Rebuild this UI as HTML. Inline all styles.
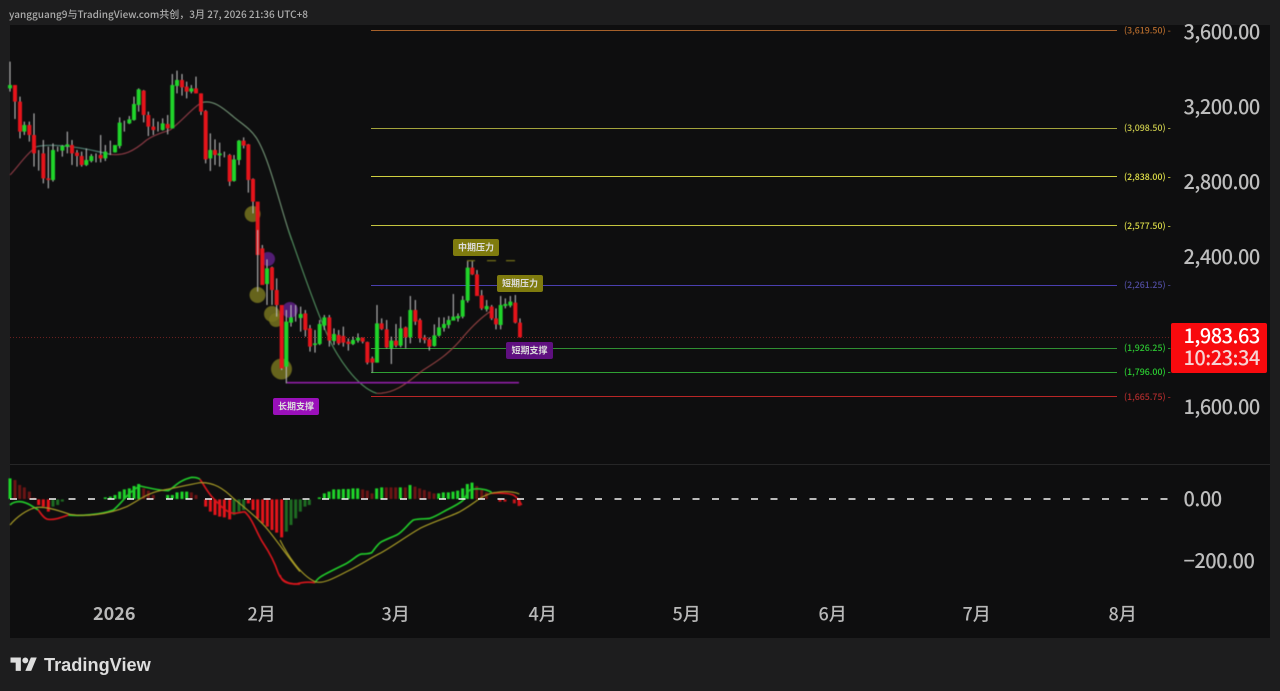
<!DOCTYPE html>
<html><head><meta charset="utf-8"><style>
html,body{margin:0;padding:0;width:1280px;height:691px;overflow:hidden;background:#1d1d1e}
svg{position:absolute;left:0;top:0;display:block}
text{font-family:"Noto Sans CJK SC","Liberation Sans",sans-serif}
.ax{font-size:20px;fill:#bdbdbd;font-weight:500;letter-spacing:-.5px}
.tm{font-size:18px;fill:#b8b8b8;font-weight:500}
.fb{font-size:8.800px;font-weight:500}
.tg{font-size:9px;fill:#dcdcdc;text-anchor:middle;font-weight:700}
</style></head><body>
<svg width="1280" height="691" viewBox="0 0 1280 691" xmlns="http://www.w3.org/2000/svg">
<rect x="10" y="25" width="1260" height="613" fill="#0e0e0f"/>
<rect x="10" y="464" width="1260" height="1" fill="#262627"/>
<text x="9" y="18" font-size="10" fill="#acacac" font-weight="500">yangguang9与TradingView.com共创，3月 27, 2026 21:36 UTC+8</text>

<!-- fib lines -->
<g fill="none" stroke-width="1">
<path d="M371 30.500H1117" stroke="#a5602a"/>
<path d="M371 128.500H1117" stroke="#a3a33c"/>
<path d="M371 176.500H1117" stroke="#cfcf40"/>
<path d="M371 225.500H1117" stroke="#c4c43e"/>
<path d="M371 285.500H1117" stroke="#4a3fb0"/>
<path d="M371 348.500H1117" stroke="#2f8f33"/>
<path d="M371 372.500H1117" stroke="#2fa033"/>
<path d="M371 396.500H1117" stroke="#b82626"/>
<path d="M10 337.500H1170" stroke="#6a2020" stroke-dasharray="1 2"/>
</g>

<g style="filter:blur(.4px)">
<!-- circles -->
<g fill="#75731e" fill-opacity=".85">
<circle cx="252.600" cy="214" r="8"/><circle cx="257.500" cy="295" r="8"/><circle cx="272" cy="314" r="8"/><circle cx="276" cy="320" r="7"/><circle cx="281.500" cy="369" r="10.500"/>
</g>
<g fill="#5a1f80" fill-opacity=".9">
<circle cx="268" cy="259" r="7"/><circle cx="290" cy="310" r="8"/>
</g>
<!-- moving averages -->
<g fill="none">
<path transform="scale(.33333)" stroke-width="3.500" stroke="#8a3a44" d="M30 525C50 505 80 460 110 440"/>
<path transform="scale(.33333)" stroke-width="3.500" stroke="#4f7f72" d="M110 440C140 432 210 435 300 456L330 463"/>
<path transform="scale(.33333)" stroke-width="3.500" stroke="#8a3a44" d="M330 463C370 468 400 455 440 420C470 400 490 398 510 390C550 360 580 320 605 308"/>
<path transform="scale(.33333)" stroke-width="3.500" stroke="#6f8f72" d="M605 308C640 298 670 325 700 350C730 375 750 385 770 415C810 480 840 620 875 720"/>
<path transform="translate(230 230) scale(.33333)" stroke-width="3.500" stroke="#4f8a5c" d="M175 0C200 70 250 220 290 310C320 380 380 470 440 490"/>
<path transform="translate(230 230) scale(.33333)" stroke-width="3.500" stroke="#8f4040" d="M440 490C500 492 540 450 580 420C620 395 660 370 700 320C730 285 755 262 780 245"/>
</g>
<!-- candles part 1, in 3x crop coordinates -->
<g transform="scale(.33333)" fill="none">
<path stroke="#bcbcbc" stroke-width="3.200" d="M30 185V275M45 255V357M60 290V415M73 365V405M88 365V425M102 340V500M116 450V512M130 420V550M145 440V565M159 430V545M173 440V455M187 435V470M202 395V460M216 420V495M231 450V500M245 455V500M259 445V498M274 462V487M288 460V487M302 405V487M316 435V483M331 422V465M345 435V458M359 352V445M373 362V395M388 348V372M402 290V362M416 265V335M431 270V367M445 335V408M460 355V405M474 365V395M488 355V392M503 345V403M517 222V385M531 212V280M546 222V287M560 245V295M574 255V280M588 230V280M603 280V345M617 330V490M631 400V513M645 418V495M659 428V500M673 455V472M689 462V558M702 465V545M717 420V495M731 412V445M745 432V578M759 535V640"/>
<path stroke="#20d42a" stroke-width="12" d="M30 255V265M73 375V395M159 450V540M187 438V452M202 433V440M259 480V495M274 468V483M316 455V475M345 435V457M359 368V438M388 358V370M402 312V360M416 268V315M488 370V390M517 255V385M531 240V258M574 265V275M631 450V475M659 460V466M702 478V543M717 422V480"/>
<path stroke="#e5141b" stroke-width="12" d="M45 255V305M60 305V395M88 375V405M102 405V460M130 460V535M145 535V540M216 435V460M231 458V468M245 468V495M302 465V475M431 272V345M445 345V380M460 380V390M503 372V385M546 240V262M560 260V275M588 265V280M603 280V335M617 333V478M645 450V465M689 465V545M731 422V437M745 433V540M759 537V605M773 605V765"/>
</g>
<!-- candles part 2 -->
<g transform="translate(230 230) scale(.33333)" fill="none">
<path stroke="#bcbcbc" stroke-width="3.200" d="M83 0V185M97 45V165M111 88V225M126 110V225M140 145V260M155 225V420M169 240V460M183 225V290M197 225V275M212 230V305M226 240V320M240 285V365M255 300V368M269 270V345M283 255V300M298 255V350M312 295V345M326 300V345M340 290V350M355 325V362M369 320V345M384 310V338M398 322V340M412 335V403M427 380V428M441 225V398M455 265V300M470 270V355M484 320V402M498 282V352M512 260V352M527 290V355M541 198V340M556 210V285M570 265V338M584 315V340M598 322V362M613 283V350M627 262V320M642 262V305M656 258V295M670 192V270M684 250V275M698 198V265M713 92V218M727 92V135M741 120V198M755 180V240M770 210V245M785 225V270M798 235V298M812 198V298M826 205V235M841 198V232M856 195V280M870 265V322"/>
<path stroke="#20d42a" stroke-width="12" d="M111 115V162M169 275V410M183 262V278M212 252V264M255 340V345M269 282V342M283 262V287M312 312V333M369 330V342M384 323V332M441 280V398M484 332V355M512 295V347M541 240V322M613 316V348M627 292V317M642 282V294M656 270V285M670 260V272M684 258V265M698 210V260M713 113V212M770 228V238M812 225V285M826 222V228M841 215V227"/>
<path stroke="#e5141b" stroke-width="12" d="M97 55V165M126 112V180M140 180V225M155 225V415M226 250V300M240 295V350M298 262V332M326 315V340M340 318V338M355 335V342M398 323V335M412 336V398M427 385V398M455 280V297M470 298V352M498 332V347M527 292V322M556 240V275M570 270V325M584 322V330M598 328V350M727 113V133M741 133V198M755 196V235M785 230V265M798 265V283M856 218V278M870 278V322"/>
</g>
<!-- purple support + olive dashes -->
<path d="M287 382.700H519" stroke="#8f1fa6" stroke-width="1.600"/>
<path d="M467 260.700H475M487 260.700H496M506 260.700H515" stroke="#7d7a18" stroke-width="1.200"/>

<!-- MACD -->
<g transform="translate(0 460) scale(.33333)" fill="none" stroke-width="9">
<path stroke="#1fd42a" d="M30 117V55M316 117V112M331 117V110M345 117V105M359 117V95M373 117V88M388 117V85M402 117V78M416 117V72M503 117V105M517 117V105M531 117V97M546 117V95M560 117V95"/>
<path stroke="#6b1515" d="M45 117V60M59 117V75M73 117V82M88 117V95M102 117V113M431 117V85M445 117V92M460 117V105M574 117V97M588 117V105"/>
<path stroke="#e5141b" d="M116 118V135M130 118V140M145 118V155M617 118V140M631 118V155M645 118V165M659 118V170M673 118V172M689 118V178M745 118V130M759 118V150M773 118V175M788 118V190M802 118V200M816 118V210M830 118V218M845 118V232"/>
<path stroke="#1e6b22" d="M159 118V140M173 118V135M187 118V125M702 118V165M717 118V155M731 118V150"/>
</g>
<g transform="translate(280 460) scale(.33333)" fill="none" stroke-width="9">
<path stroke="#1fd42a" d="M118 117V112M133 117V100M147 117V95M161 117V88M176 117V88M190 117V87M205 117V87M219 117V85M233 117V85M290 117V85M305 117V82M361 117V82M390 117V75M476 117V100M490 117V97M505 117V97M519 117V95M533 117V92M548 117V85M562 117V72M576 117V68"/>
<path stroke="#6b1515" d="M248 117V88M262 117V92M276 117V100M319 117V82M333 117V82M347 117V82M376 117V82M405 117V80M419 117V85M433 117V90M448 117V95M462 117V100M590 117V78M605 117V90M619 117V97"/>
<path stroke="#1e6b22" d="M19 118V215M33 118V195M47 118V175M61 118V155M75 118V140M88 118V135"/>
<path stroke="#c8141b" d="M660 118V125M675 118V125M703 118V130M717 118V138"/>
</g>
<g transform="translate(0 460) scale(.33333)" fill="none" stroke-width="5">
<path stroke="#21c92a" d="M30 135C40 125 60 122 75 128C90 132 100 142 115 150"/>
<path stroke="#d8161c" d="M115 150C125 165 135 178 145 178C165 180 185 172 205 165"/>
<path stroke="#21c92a" d="M205 165C240 168 300 165 340 150C365 130 385 95 420 78C450 85 480 92 505 92C525 80 535 62 575 52C585 52 595 54 600 58"/>
<path stroke="#d8161c" d="M600 58C615 80 625 100 640 115C660 135 675 155 700 160C715 160 725 155 735 156C760 180 770 220 790 250C810 280 825 310 835 340C845 365 870 374 900 372"/>
<path stroke="#a89c26" stroke-width="3.500" d="M30 195C50 170 80 150 105 143C130 138 165 148 210 163C255 170 320 165 380 140C410 125 440 100 480 92C520 85 560 75 600 68C640 66 670 85 700 115C730 140 770 170 800 205C830 240 870 300 900 335"/>
</g>
<g transform="translate(280 460) scale(.33333)" fill="none" stroke-width="5">
<path stroke="#d8161c" d="M0 345C5 365 20 372 50 372C70 365 90 366 105 368"/>
<path stroke="#21c92a" d="M105 368C115 350 130 345 200 310C225 295 235 282 245 282C260 282 270 280 275 278C285 265 295 250 305 245C325 235 340 230 350 225C370 215 385 190 400 180C420 174 440 178 450 175C470 168 490 155 500 150C520 140 540 130 550 120C560 105 565 92 570 90C585 84 615 85 635 97"/>
<path stroke="#d8161c" d="M635 100C660 98 690 100 700 105C712 112 720 125 725 135"/>
<path stroke="#a89c26" stroke-width="3.500" d="M0 240C20 280 60 345 105 365C130 374 170 350 200 335C240 315 270 295 300 280C340 258 380 228 420 205C460 185 510 170 540 155C570 138 590 122 600 115C620 103 640 97 650 97C670 93 700 94 718 102"/>
</g>
</g>
<path d="M10 499H1168" stroke="#f4f4f4" stroke-width="1.500" stroke-dasharray="7 12.500"/>

<!-- fib labels -->
<g>
<text class="fb" x="1124" y="33.500" fill="#b36a2c">(3,619.50) -</text>
<text class="fb" x="1124" y="131" fill="#cccc4c">(3,098.50) -</text>
<text class="fb" x="1124" y="180" fill="#e0e048">(2,838.00) -</text>
<text class="fb" x="1124" y="229" fill="#dcdc48">(2,577.50) -</text>
<text class="fb" x="1124" y="288" fill="#504ca0">(2,261.25) -</text>
<text class="fb" x="1124" y="351" fill="#2cc532">(1,926.25) -</text>
<text class="fb" x="1124" y="375" fill="#2cd032">(1,796.00) -</text>
<text class="fb" x="1124" y="400" fill="#b02c2c">(1,665.75) -</text>
</g>

<!-- tags -->
<rect x="453" y="239" width="46" height="17" rx="2" fill="#7f7b0e"/><text class="tg" x="476" y="250.500">中期压力</text>
<rect x="497" y="275" width="46" height="17" rx="2" fill="#7f7b0e"/><text class="tg" x="520" y="286.500">短期压力</text>
<rect x="506" y="342" width="47" height="17" rx="2" fill="#5f1080"/><text class="tg" x="529.500" y="353.500">短期支撑</text>
<rect x="273" y="398" width="46" height="17" rx="2" fill="#9a10ba"/><text class="tg" x="296" y="409.500">长期支撑</text>

<!-- axis labels -->
<text class="ax" x="1183.500" y="39">3,600.00</text>
<text class="ax" x="1183.500" y="114">3,200.00</text>
<text class="ax" x="1183.500" y="189">2,800.00</text>
<text class="ax" x="1183.500" y="264">2,400.00</text>
<text class="ax" x="1183.500" y="414">1,600.00</text>
<text class="ax" x="1183.500" y="506">0.00</text>
<text class="ax" x="1183.500" y="568">−200.00</text>
<rect x="1171" y="323" width="96" height="50" rx="2" fill="#f80a0e"/>
<text x="1183.500" y="343" font-size="20" fill="#fff" font-weight="500" letter-spacing="-.5">1,983.63</text>
<text x="1183.500" y="365" font-size="20" fill="#f6d4d4" font-weight="500" letter-spacing="-.5">10:23:34</text>

<!-- time axis -->
<text class="tm" x="93" y="620" style="font-weight:700">2026</text>
<text class="tm" x="247.500" y="620.500">2月</text>
<text class="tm" x="381.500" y="620.500">3月</text>
<text class="tm" x="528.500" y="620.500">4月</text>
<text class="tm" x="672.500" y="620.500">5月</text>
<text class="tm" x="818.500" y="620.500">6月</text>
<text class="tm" x="962.500" y="620.500">7月</text>
<text class="tm" x="1108.500" y="620.500">8月</text>

<!-- logo -->
<g transform="translate(10.500 657.500) scale(.74)" fill="#dedede">
<path d="M14 18H7V7H0V0h14v18zM28 18h-8L27.500 0h8L28 18z"/><circle cx="20" cy="4" r="4"/>
</g>
<text x="44" y="671" fill="#dedede" style="font-family:'Liberation Sans',sans-serif;font-size:18.200px;font-weight:700">TradingView</text>
</svg>
</body></html>
